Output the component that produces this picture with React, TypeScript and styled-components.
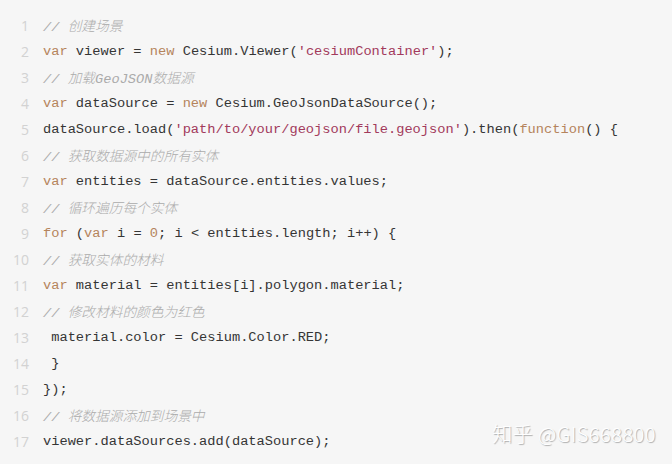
import React from "react";
import styled, { createGlobalStyle } from "styled-components";

const Global = createGlobalStyle`
  html, body { margin: 0; padding: 0; background: #f6f6f6; }
  body { width: 672px; height: 464px; overflow: hidden; }
`;

const Page = styled.div`
  position: relative;
  width: 672px;
  height: 464px;
  background: #f6f6f6;
  box-sizing: border-box;
  padding-top: 12px;
`;

const CodeBlock = styled.div`
  display: flex;
  flex-direction: column;
`;

const Row = styled.div`
  display: flex;
  align-items: center;
  height: 26px;
`;

const LineNo = styled.span`
  width: 29px;
  flex: none;
  text-align: right;
  font-family: "Open Sans", "Noto Sans", sans-serif;
  font-size: 14px;
  color: #d2d2d2;
`;

const Code = styled.span`
  margin-left: 14px;
  white-space: pre;
  font-family: "Liberation Mono", "Noto Sans CJK SC", monospace;
  font-size: 13.7px;
  color: #353535;
`;

type Kind = "kw" | "str" | "cm" | "num";

const Tok = styled.span<{ $k: Kind }>`
  color: ${(p) =>
    p.$k === "kw" ? "#b5845c" : p.$k === "str" ? "#a23a5c" : p.$k === "num" ? "#b5845c" : "#ababab"};
  font-style: ${(p) => (p.$k === "cm" ? "italic" : "normal")};
  font-weight: ${(p) => (p.$k === "cm" ? 300 : 400)};
`;

const Watermark = styled.div`
  position: absolute;
  right: 16px;
  bottom: 16px;
  font-family: "Noto Sans CJK SC", "Noto Sans", sans-serif;
  font-weight: 300;
  font-size: 20px;
  color: #ffffff;
  text-shadow: 1px 1px 1px rgba(0, 0, 0, 0.3);
  letter-spacing: 0.5px;
`;

type Part = string | [Kind, string];

const lines: Part[][] = [
  [["cm", "// 创建场景"]],
  [["kw", "var"], " viewer = ", ["kw", "new"], " Cesium.Viewer(", ["str", "'cesiumContainer'"], ");"],
  [["cm", "// 加载GeoJSON数据源"]],
  [["kw", "var"], " dataSource = ", ["kw", "new"], " Cesium.GeoJsonDataSource();"],
  [
    "dataSource.load(",
    ["str", "'path/to/your/geojson/file.geojson'"],
    ").then(",
    ["kw", "function"],
    "() {",
  ],
  [["cm", "// 获取数据源中的所有实体"]],
  [["kw", "var"], " entities = dataSource.entities.values;"],
  [["cm", "// 循环遍历每个实体"]],
  [["kw", "for"], " (", ["kw", "var"], " i = ", ["num", "0"], "; i < entities.length; i++) {"],
  [["cm", "// 获取实体的材料"]],
  [["kw", "var"], " material = entities[i].polygon.material;"],
  [["cm", "// 修改材料的颜色为红色"]],
  [" material.color = Cesium.Color.RED;"],
  [" }"],
  ["});"],
  [["cm", "// 将数据源添加到场景中"]],
  ["viewer.dataSources.add(dataSource);"],
];

export default function App() {
  return (
    <>
      <Global />
      <Page>
        <CodeBlock>
          {lines.map((parts, i) => (
            <Row key={i}>
              <LineNo>{i + 1}</LineNo>
              <Code>
                {parts.map((p, j) =>
                  typeof p === "string" ? (
                    <React.Fragment key={j}>{p}</React.Fragment>
                  ) : (
                    <Tok key={j} $k={p[0]}>
                      {p[1]}
                    </Tok>
                  )
                )}
              </Code>
            </Row>
          ))}
        </CodeBlock>
        <Watermark>知乎 @GIS668800</Watermark>
      </Page>
    </>
  );
}
